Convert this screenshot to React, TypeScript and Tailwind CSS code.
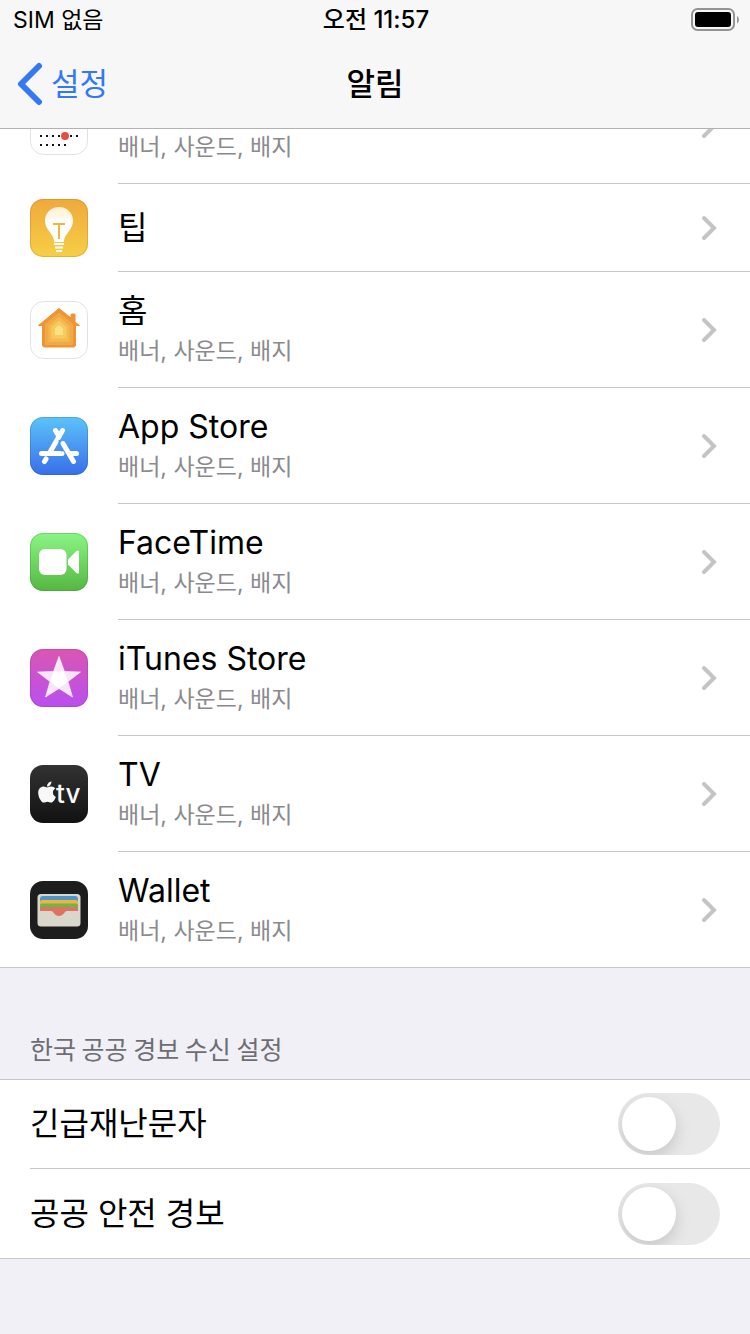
import React from 'react'
import { FaApple } from 'react-icons/fa'

const ALERT_TYPES = '배너, 사운드, 배지'

const CalendarIcon = () => (
  <svg viewBox="0 0 58 58" className="size-[58px] shrink-0" aria-hidden="true">
    <rect x="0.5" y="0.5" width="57" height="57" rx="13" fill="#fff" stroke="#e2e2e4" />
    <g stroke="#111" strokeWidth="2" strokeDasharray="2 4">
      <path d="M10 21h38M10 30h38M10 39h38M10 48h26" />
    </g>
    <circle cx="35" cy="39" r="4" fill="#ea4d3d" />
  </svg>
)

const TipsIcon = () => (
  <svg viewBox="0 0 58 58" className="size-[58px] shrink-0" aria-hidden="true">
    <defs>
      <linearGradient id="tips-bg" x1="0" y1="0" x2="0" y2="1">
        <stop offset="0" stopColor="#f0a83c" />
        <stop offset="1" stopColor="#f6cf46" />
      </linearGradient>
      <linearGradient id="tips-bulb" x1="0" y1="0" x2="0" y2="1">
        <stop offset="0" stopColor="#fdf0d0" />
        <stop offset="0.5" stopColor="#fff" />
      </linearGradient>
    </defs>
    <rect width="58" height="58" rx="13" fill="url(#tips-bg)" />
    <rect x="0.5" y="0.5" width="57" height="57" rx="12.5" fill="none" stroke="#b97f1c" strokeOpacity="0.35" />
    <path
      d="M29 8c-8 0-14 6-14 13.500c0 4.500 1.800 7.500 4.500 11.200c2.600 3.600 4.300 5.800 4.800 10.300h9.400c.5-4.500 2.200-6.700 4.800-10.300c2.700-3.700 4.500-6.700 4.500-11.200C43 14 37 8 29 8z"
      fill="url(#tips-bulb)"
    />
    <path d="M23 25h12M29 25v15" stroke="#f3b53f" strokeWidth="2" fill="none" />
    <path d="M24 45h10M25 48.500h8M26 52h6" stroke="#fff" strokeWidth="2" />
  </svg>
)

const HomeIcon = () => (
  <svg viewBox="0 0 58 58" className="size-[58px] shrink-0" aria-hidden="true">
    <rect x="0.5" y="0.5" width="57" height="57" rx="13" fill="#fff" stroke="#e2e2e4" />
    <path
      d="M29 7.500L41 17V13.500q0-.5.500-.5h3q.5 0 .5.500v7.500l4.500 3.500H45.500V44q0 2-2 2H14.500q-2 0-2-2V24.500H8.500z"
      fill="#ee9434"
      stroke="#ee9434"
      strokeLinejoin="round"
    />
    <path d="M29 11.500L43 23V42.500q0 1.500-1.500 1.500H16.500q-1.500 0-1.500-1.500V23z" fill="#f2a843" />
    <path d="M29 15.500L39.500 24.500V41h-21V24.500z" fill="#f4b850" />
    <path d="M29 19.500L36.500 26V37.500h-15V26z" fill="#f7ca5d" />
    <path d="M29 24L33 27.500V34h-8V27.500z" fill="#fae284" />
  </svg>
)

const AppStoreIcon = () => (
  <svg viewBox="0 0 58 58" className="size-[58px] shrink-0" aria-hidden="true">
    <defs>
      <linearGradient id="store-bg" x1="0" y1="0" x2="0" y2="1">
        <stop offset="0" stopColor="#5cc3f8" />
        <stop offset="1" stopColor="#386eea" />
      </linearGradient>
    </defs>
    <rect width="58" height="58" rx="13" fill="url(#store-bg)" />
    <rect x="0.5" y="0.5" width="57" height="57" rx="12.5" fill="none" stroke="#1c54b0" strokeOpacity="0.25" />
    <g stroke="#fff" strokeWidth="5" strokeLinecap="round" fill="none">
      <path d="M32.500 13.500L19.500 36M16 42l-1.500 2.500M11.500 36.500H32M41 36.500h5.500" />
      <path d="M25.500 13.500L29 19.500M33 26.500L43.500 44.500" />
    </g>
    <path d="M29.500 23c-.8 4 .5 7.500 2.700 11.500" stroke="#4a94f1" strokeWidth="1.500" fill="none" />
  </svg>
)

const FaceTimeIcon = () => (
  <svg viewBox="0 0 58 58" className="size-[58px] shrink-0" aria-hidden="true">
    <defs>
      <linearGradient id="facetime-bg" x1="0" y1="0" x2="0" y2="1">
        <stop offset="0" stopColor="#8af585" />
        <stop offset="1" stopColor="#55b742" />
      </linearGradient>
    </defs>
    <rect width="58" height="58" rx="13" fill="url(#facetime-bg)" />
    <rect x="0.5" y="0.5" width="57" height="57" rx="12.5" fill="none" stroke="#2f8f2a" strokeOpacity="0.3" />
    <rect x="9" y="16" width="27.500" height="26" rx="6" fill="#fff" />
    <path d="M38 26.500L46.500 18q2.500-1.500 2.500 1v20q0 2.500-2.500 1L38 31.500z" fill="#fff" />
  </svg>
)

const ITunesIcon = () => (
  <svg viewBox="0 0 58 58" className="size-[58px] shrink-0" aria-hidden="true">
    <defs>
      <linearGradient id="itunes-bg" x1="0" y1="0" x2="0" y2="1">
        <stop offset="0" stopColor="#da56b2" />
        <stop offset="1" stopColor="#b84ff0" />
      </linearGradient>
    </defs>
    <rect width="58" height="58" rx="13" fill="url(#itunes-bg)" />
    <rect x="0.5" y="0.5" width="57" height="57" rx="12.5" fill="none" stroke="#8a2a8f" strokeOpacity="0.25" />
    <path
      d="M29 7.500L34.500 22.500L50.500 23L38 32.500L42.500 48L29 39.500L15.500 48L20 32.500L7.500 23L23.500 22.500z"
      fill="#fff"
      fillOpacity="0.86"
      stroke="#fff"
      strokeOpacity="0.6"
      strokeLinejoin="round"
    />
    <path d="M23.500 22.500h11L38 32.500L29 39.500L20 32.500z" fill="#fff" />
  </svg>
)

const TvIcon = () => (
  <svg viewBox="0 0 58 58" className="size-[58px] shrink-0 text-[#f8f8f8]" aria-hidden="true">
    <defs>
      <linearGradient id="tv-bg" x1="0" y1="0" x2="0" y2="1">
        <stop offset="0" stopColor="#323232" />
        <stop offset="1" stopColor="#121212" />
      </linearGradient>
    </defs>
    <rect width="58" height="58" rx="13" fill="url(#tv-bg)" />
    <FaApple x="5" y="15" size={24} />
    <text x="26" y="38" fill="currentColor" fontSize="26" fontWeight="500">
      tv
    </text>
  </svg>
)

const WalletIcon = () => (
  <svg viewBox="0 0 58 58" className="size-[58px] shrink-0" aria-hidden="true">
    <rect width="58" height="58" rx="13" fill="#1d1d1d" />
    <rect x="7.500" y="13" width="43" height="32.500" rx="3.500" fill="#d9d6cc" />
    <path d="M10 18q0-3 3-3h32q3 0 3 3v5H10z" fill="#4f95c9" />
    <path d="M10 21q0-2 2-2h34q2 0 2 2v5H10z" fill="#f2b33c" />
    <path d="M10 24.500q0-2 2-2h34q2 0 2 2v5H10z" fill="#6cb64a" />
    <path d="M10 28q0-2 2-2h34q2 0 2 2v2H10z" fill="#e07262" />
    <path d="M20.500 29.500h17c-3 .5-4 5.500-8.500 5.500s-5.500-5-8.500-5.500z" fill="#e07262" />
  </svg>
)

type AppEntry = {
  name: string
  icon: React.FC
  detail?: string
}

const apps: AppEntry[] = [
  { name: '캘린더', icon: CalendarIcon, detail: ALERT_TYPES },
  { name: '팁', icon: TipsIcon },
  { name: '홈', icon: HomeIcon, detail: ALERT_TYPES },
  { name: 'App Store', icon: AppStoreIcon, detail: ALERT_TYPES },
  { name: 'FaceTime', icon: FaceTimeIcon, detail: ALERT_TYPES },
  { name: 'iTunes Store', icon: ITunesIcon, detail: ALERT_TYPES },
  { name: 'TV', icon: TvIcon, detail: ALERT_TYPES },
  { name: 'Wallet', icon: WalletIcon, detail: ALERT_TYPES }
]

const alerts = [
  { id: 'emergency', label: '긴급재난문자' },
  { id: 'safety', label: '공공 안전 경보' }
]

const StatusBar = () => (
  <div className="grid h-10 grid-cols-3 items-center pr-[11px] pl-[13px] text-[23px]">
    <span>SIM 없음</span>
    <span className="text-center text-2xl font-medium">오전 11:57</span>
    <svg viewBox="0 0 48 24" className="h-6 w-12 justify-self-end" role="img" aria-label="배터리">
      <rect x="1" y="1" width="42" height="21" rx="5.500" fill="none" stroke="#949494" strokeWidth="2" />
      <rect x="4" y="4" width="36" height="15" rx="3" fill="#000" />
      <path d="M46 8c2.600 1.500 2.600 6 0 7.500z" fill="#949494" />
    </svg>
  </div>
)

const NavBar = () => (
  <div className="grid h-22 grid-cols-3 items-center px-4">
    <a href="#settings" className="flex items-center gap-2 text-[31px] text-[#3478f6]">
      <svg viewBox="0 0 27 44" className="h-11 w-[27px]" aria-hidden="true">
        <path d="M23 4L5 22L23 40" fill="none" stroke="currentColor" strokeWidth="6" strokeLinecap="round" strokeLinejoin="round" />
      </svg>
      설정
    </a>
    <h1 className="text-center text-[31px] font-medium">알림</h1>
  </div>
)

const AppRow = ({ name, icon: Icon, detail }: AppEntry) => (
  <li className="group">
    <a href={`#${name}`} className="flex items-center gap-[30px] pl-[30px] group-last:border-b group-last:border-[#c6c6c8]">
      <Icon />
      <div
        className={`flex flex-1 items-center justify-between border-b border-[#c6c6c8] pr-[33px] group-last:border-b-0 ${
          detail ? 'h-[116px] group-last:h-[115px]' : 'h-22'
        }`}
      >
        <div>
          <p className="text-[32px] leading-[42px]">{name}</p>
          {detail && <p className="text-[23px] leading-[38px] text-[#8a8a8e]">{detail}</p>}
        </div>
        <svg viewBox="0 0 16 26" className="h-[26px] w-4" aria-hidden="true">
          <path d="M3 3L13 13L3 23" fill="none" stroke="#c4c4c6" strokeWidth="4" strokeLinecap="round" strokeLinejoin="miter" />
        </svg>
      </div>
    </a>
  </li>
)

const AlertRow = ({ id, label }: { id: string; label: string }) => (
  <div className="group pl-[30px] last:pl-0">
    <div className="flex h-[89px] items-center justify-between border-b border-[#c6c6c8] pr-[30px] group-last:h-[90px] group-last:pl-[30px]">
      <label htmlFor={id} className="text-[32px]">
        {label}
      </label>
      <input
        id={id}
        type="checkbox"
        role="switch"
        className="h-[62px] w-[102px] appearance-none overflow-hidden rounded-full bg-[#e8e8e8] p-1 before:block before:size-[54px] before:rounded-full before:bg-white before:shadow-[0_6px_16px_rgba(0,0,0,0.15)] checked:bg-[#34c759] checked:before:ml-10"
      />
    </div>
  </div>
)

const App: React.FC = () => {
  return (
    <div className="min-h-screen bg-[#f1f0f6] font-['Inter','Noto_Sans_CJK_KR',sans-serif] text-black">
      <header className="sticky top-0 z-10 border-b border-[#b2b2b4] bg-[#f7f7f7]">
        <StatusBar />
        <NavBar />
      </header>

      <main>
        {/* list starts scrolled under the navigation bar */}
        <ul className="-mt-[61px] bg-white">
          {apps.map((app) => (
            <AppRow key={app.name} {...app} />
          ))}
        </ul>

        <section>
          <h2 className="px-[30px] pt-[63px] pb-[13px] font-['Noto_Sans_CJK_KR',sans-serif] text-[25px] leading-[35px] text-[#6d6d72]">
            한국 공공 경보 수신 설정
          </h2>
          <div className="border-t border-[#c6c6c8] bg-white">
            {alerts.map((alert) => (
              <AlertRow key={alert.id} {...alert} />
            ))}
          </div>
        </section>
      </main>
    </div>
  )
}

export default App
